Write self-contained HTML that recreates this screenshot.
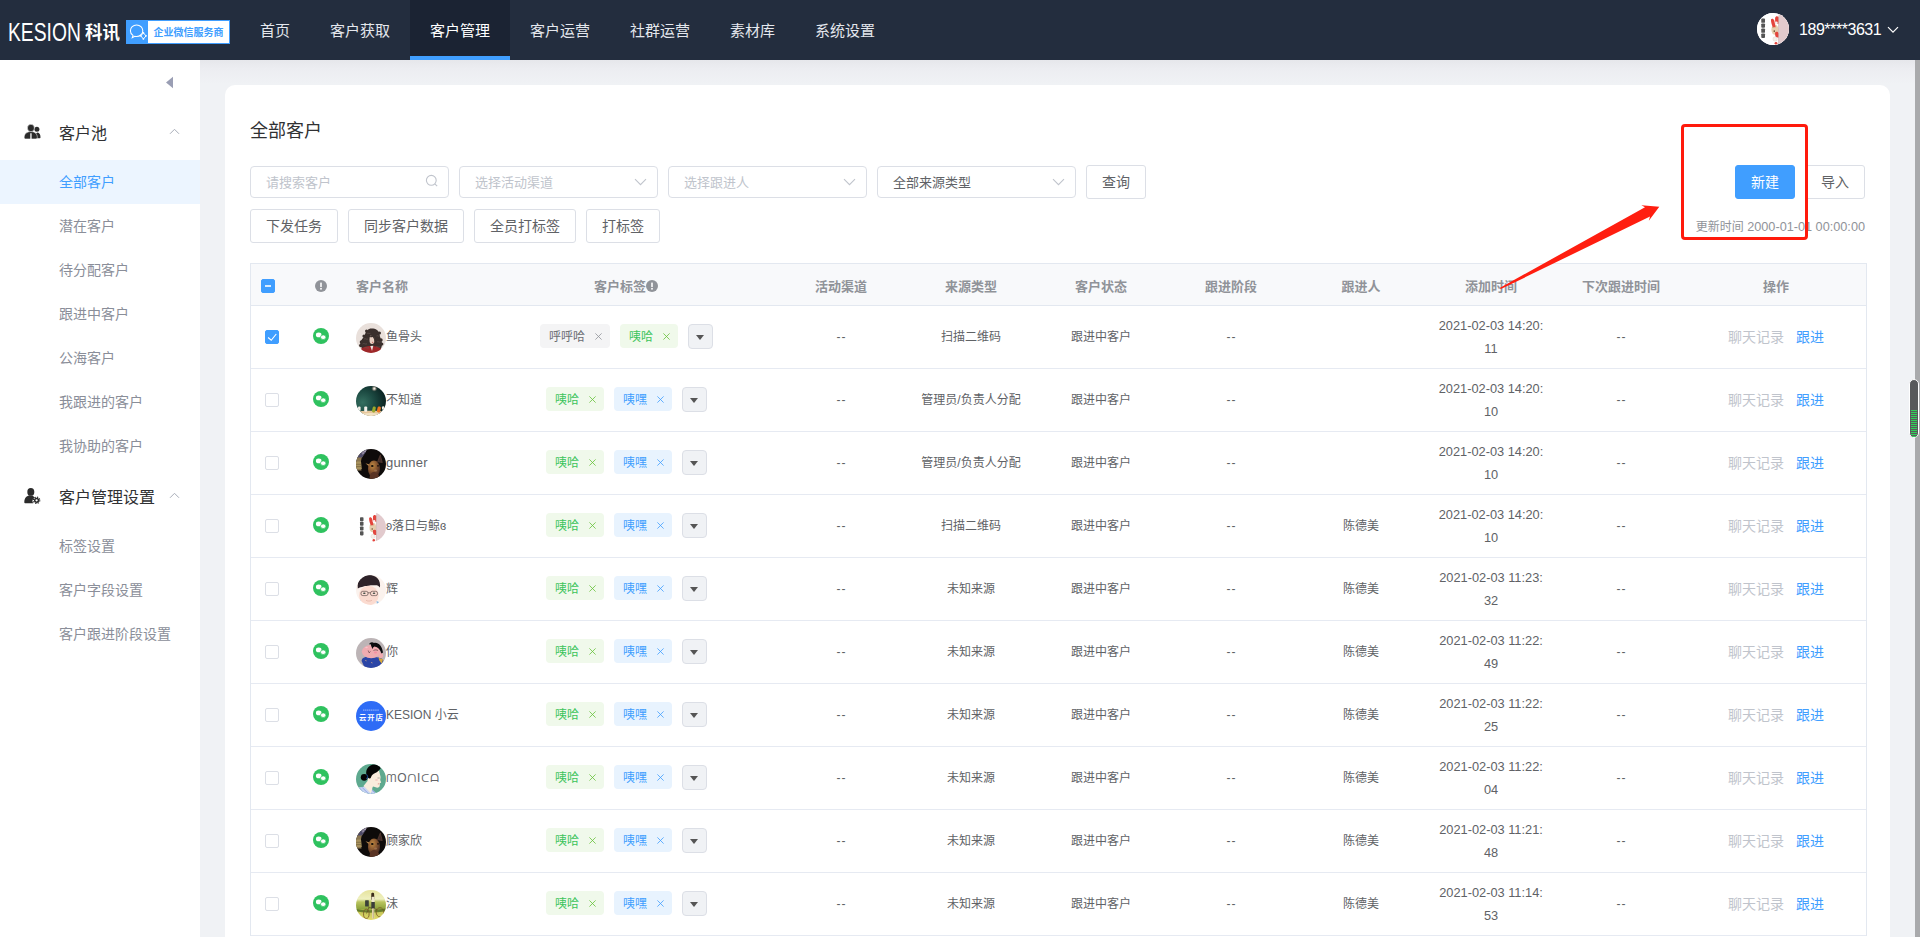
<!DOCTYPE html>
<html lang="zh-CN">
<head>
<meta charset="utf-8">
<title>全部客户</title>
<style>
*{box-sizing:border-box;margin:0;padding:0}
html,body{width:1920px;height:937px;overflow:hidden;background:#f0f2f5;}
body{font-family:"Liberation Sans","Noto Sans CJK SC",sans-serif;color:#606266;font-size:14px;position:relative}
.abs{position:absolute}
/* header */
#hd{position:absolute;left:0;top:0;width:1920px;height:60px;background:#232d3e;z-index:5}
#hdshadow{position:absolute;left:200px;top:60px;width:1715px;height:24px;background:linear-gradient(#e6e7eb,#ecedf1 35%,#f0f2f5);}
.nav{position:absolute;top:0;height:60px;line-height:62px;color:#e4e7ed;font-size:15px;text-align:center}
.nav.on{background:#1b2333;color:#fff;border-bottom:4px solid #409eff}
/* sidebar */
#sb{position:absolute;left:0;top:60px;width:200px;height:877px;background:#fff}
.grp{position:absolute;left:59px;font-size:16px;color:#303133;line-height:20px;white-space:nowrap}
.it{position:absolute;left:0;width:200px;height:44px;line-height:44px;padding-left:59px;font-size:14px;color:#8a8e99;white-space:nowrap}
.it.on{background:#ecf5ff;color:#409eff}
/* card */
#card{position:absolute;left:225px;top:85px;width:1665px;height:870px;background:#fff;border-radius:10px}
.inp{position:absolute;top:166px;height:32px;border:1px solid #dcdfe6;border-radius:4px;background:#fff;font-size:13px;line-height:31px;padding-left:15px;color:#c0c4cc;white-space:nowrap}
.btn{position:absolute;border:1px solid #dcdfe6;border-radius:3px;background:#fff;color:#606266;font-size:14px;text-align:center;white-space:nowrap}

#ttl{position:absolute;left:250px;top:119px;font-size:18px;line-height:24px;color:#303133;white-space:nowrap}
.chev{position:absolute;top:11px;right:10px}
#tbl{position:absolute;left:250px;top:263px;width:1617px;height:673px;border:1px solid #e3e8f0;border-bottom:none;background:#fff}
#th{position:absolute;left:0;top:0;width:1615px;height:42px;background:#f8f9fb;border-bottom:1px solid #e3e8f0}
.h{position:absolute;top:0;height:41px;line-height:45px;font-size:13px;font-weight:700;color:#909399;text-align:center;white-space:nowrap}
.r{position:absolute;left:0;width:1615px;height:63px;border-bottom:1px solid #e6eaf2;font-size:12px;color:#606266}
.c{position:absolute;top:0;height:62px;line-height:62px;text-align:center;white-space:nowrap}
.cb{position:absolute;width:14px;height:14px;border:1px solid #dcdfe6;border-radius:2px;background:#fff}
.cb.on{background:#409eff;border-color:#409eff}
.wx{position:absolute;left:62px;top:22px;width:16px;height:16px}
.av{position:absolute;left:105px;top:17px;width:30px;height:30px;border-radius:50%;overflow:hidden}
.nm{position:absolute;left:135px;top:0;height:62px;line-height:62px;white-space:nowrap}
.tags{position:absolute;left:224px;top:18px;width:303px;height:24px;text-align:center;white-space:nowrap;font-size:0}
.tg{display:inline-block;height:24px;line-height:26px;padding:0 8px 0 9px;border-radius:4px;font-size:12px;margin-right:10px;vertical-align:top}
.tg i{display:inline-block;width:7px;height:7px;margin-left:10px;position:relative;top:-1px}
.tg.g{background:#f0f9eb;color:#3cc45c}
.tg.b{background:#e8f3fe;color:#409eff}
.tg.n{background:#f4f4f5;color:#6b6d72}
.dd{display:inline-block;width:25px;height:25px;border:1px solid #dcdfe6;border-radius:4px;background:#f0f2f5;vertical-align:top;position:relative}
.dd:after{content:"";position:absolute;left:7px;top:10px;border:4px solid transparent;border-top:5px solid #555;border-bottom:none}
.dt{position:absolute;left:1175px;top:8px;width:130px;line-height:23px;text-align:center;font-size:12.800px}
.op1{position:absolute;left:1477px;top:0;line-height:62px;font-size:14px;color:#c0c4cc}
.op2{position:absolute;left:1545px;top:0;line-height:62px;font-size:14px;color:#409eff}
</style>
</head>
<body>
<div id="hd">
<div class="abs" id="logo1" style="left:8px;top:19px;height:26px;line-height:26px;font-size:26px;color:#fff;transform-origin:0 50%;transform:scaleX(.741);white-space:nowrap;letter-spacing:0">KESION</div>
<div class="abs" id="logo2" style="left:85px;top:20px;height:26px;line-height:26px;font-size:18px;font-weight:700;color:#fff;transform-origin:0 50%;transform:scaleX(.967);white-space:nowrap">科讯</div>
<div class="abs" style="left:126px;top:20px;width:104px;height:24px;background:#409eff;border:1px solid #409eff">
  <svg class="abs" style="left:1px;top:2px" width="20" height="20" viewBox="0 0 20 20"><path d="M8.600 1.900c-3.500 0-6.200 2.600-6.200 5.800 0 2 1 3.700 2.600 4.700l-.7 2.200 2.500-1.400c.6.150 1.200.25 1.800.25 3.500 0 6.200-2.600 6.200-5.800S12.100 1.900 8.600 1.900z" fill="none" stroke="#fff" stroke-width="1.050"/><path d="M15.400 9.800l2.600 3.100-2.600 3.100-2.600-3.100z" fill="#409eff" stroke="#fff" stroke-width=".95"/><circle cx="15.400" cy="9.900" r=".85" fill="#fff"/><circle cx="15.400" cy="16" r=".85" fill="#fff"/><circle cx="12.800" cy="12.900" r=".8" fill="#fff"/><circle cx="18" cy="12.900" r=".8" fill="#fff"/></svg>
  <div class="abs" id="badge" style="left:21px;top:0;width:81px;height:22px;background:#fff;color:#409eff;font-size:10px;font-weight:700;line-height:23px;text-align:center;white-space:nowrap">企业微信服务商</div>
</div>
<div class="nav" style="left:240px;width:70px">首页</div>
<div class="nav" style="left:310px;width:100px">客户获取</div>
<div class="nav on" style="left:410px;width:100px">客户管理</div>
<div class="nav" style="left:510px;width:100px">客户运营</div>
<div class="nav" style="left:610px;width:100px">社群运营</div>
<div class="nav" style="left:710px;width:85px">素材库</div>
<div class="nav" style="left:795px;width:100px">系统设置</div>
<div class="abs" id="uav" style="left:1757px;top:13px;width:32px;height:32px;border-radius:50%;overflow:hidden;background:#fff"><svg width="32" height="32" viewBox="0 0 30 30" style="display:block"><rect width="30" height="30" fill="#fff"/><rect x="20.200" y="0" width="10" height="30" fill="#e2cacd"/><g fill="#555"><rect x="4" y="5.200" width="3.500" height="4" rx=".8"/><rect x="4" y="9.800" width="3.500" height="4" rx=".8"/><rect x="4" y="14.500" width="3.500" height="4" rx=".8"/><rect x="4" y="19.200" width="3.500" height="4.200" rx=".8"/></g><ellipse cx="16.800" cy="15.500" rx="3.300" ry="4.800" fill="#e6ceae"/><path d="M13.100 6.200c.4-1.400 2.400-1.200 3.100.8l1.300 6.300h-2.700c-1-2.300-1.800-4.800-1.700-7.100z" fill="#e4443c"/><path d="M17 4.500c.5-2 2.500-2 3.200-.5v6h-2.600c-.6-2-.8-4-.6-5.500z" fill="#e4443c"/><circle cx="18.200" cy="9.200" r="1.250" fill="#f6efef"/><circle cx="16.200" cy="17" r=".75" fill="#6a4a2a"/><circle cx="15" cy="13.500" r=".6" fill="#c9a070"/><path d="M17 18.200c1-1 3.200-.6 3.200.9V23h-2.400c-.8-1.500-1-3.400-.8-4.800z" fill="#e4443c"/><circle cx="17" cy="24.400" r="2.100" fill="#f5efea" stroke="#d8c8b8" stroke-width=".3"/><circle cx="17.800" cy="28.400" r="1.300" fill="#e4443c"/><rect x="19.900" y="3" width=".6" height="26" fill="#b89a90" opacity=".6"/></svg></div>
<div class="abs" id="uname" style="left:1799px;top:20px;height:20px;line-height:20px;font-size:16px;letter-spacing:-.45px;color:#fff;white-space:nowrap">189****3631</div>
<svg class="abs" style="left:1887px;top:25px" width="12" height="10" viewBox="0 0 12 10"><path d="M1 2.200l5 5 5-5" fill="none" stroke="#fff" stroke-width="1.200"/></svg>
</div>
<div id="hdshadow"></div>
<div id="sb">
<svg class="abs" style="left:165px;top:16px" width="9" height="13" viewBox="0 0 9 13"><path d="M8 0.800v11.400L1 6.500z" fill="#9a9eb4"/></svg>
<svg class="abs" style="left:24px;top:64px" width="17" height="16" viewBox="0 0 17 16"><circle cx="12.900" cy="5.200" r="2.500" fill="#2b2b2b"/><path d="M11 14.300c.3-3.500 1-5.800 2.600-5.800 1.800 0 2.900 2.200 2.900 4.700 0 .7-.4 1.100-1 1.100z" fill="#2b2b2b"/><ellipse cx="6.900" cy="4" rx="3.500" ry="3.700" fill="#2b2b2b" stroke="#fff" stroke-width=".5"/><path d="M0.200 13.600c0-3.800 2.600-6 6.700-6s6.400 2.200 6.400 6c0 .8-.5 1.300-1.300 1.300H1.500c-.8 0-1.300-.5-1.300-1.300z" fill="#2b2b2b" stroke="#fff" stroke-width=".5"/><path d="M6.300 9.200h1.300v5.800H6.300z" fill="#fff"/></svg>
<div class="grp" style="top:64px">客户池</div>
<svg class="abs" style="left:169px;top:68px" width="11" height="7" viewBox="0 0 11 7"><path d="M1 5.800l4.500-4.500 4.500 4.500" fill="none" stroke="#a8adb8" stroke-width="1"/></svg>
<div class="it on" style="top:100px">全部客户</div>
<div class="it" style="top:144px">潜在客户</div>
<div class="it" style="top:188px">待分配客户</div>
<div class="it" style="top:232px">跟进中客户</div>
<div class="it" style="top:276px">公海客户</div>
<div class="it" style="top:320px">我跟进的客户</div>
<div class="it" style="top:364px">我协助的客户</div>
<svg class="abs" style="left:24px;top:428px" width="17" height="17" viewBox="0 0 17 17"><ellipse cx="6.800" cy="3.900" rx="3.500" ry="3.900" fill="#2b2b2b"/><path d="M0.300 14.200c0-4.300 2.300-6.800 5.800-6.800 2.200 0 3.800.9 4.700 2.300-1.600.7-2.500 2.100-2.300 3.700.1.700.4 1.300.8 1.800H1.500c-.7 0-1.200-.4-1.200-1z" fill="#2b2b2b"/><circle cx="12.600" cy="12.300" r="1.900" fill="none" stroke="#2b2b2b" stroke-width="1.500"/><circle cx="12.600" cy="12.300" r="3.200" fill="none" stroke="#2b2b2b" stroke-width="1.100" stroke-dasharray="1.300 1.213"/></svg>
<div class="grp" style="top:428px">客户管理设置</div>
<svg class="abs" style="left:169px;top:432px" width="11" height="7" viewBox="0 0 11 7"><path d="M1 5.800l4.500-4.500 4.500 4.500" fill="none" stroke="#a8adb8" stroke-width="1"/></svg>
<div class="it" style="top:464px">标签设置</div>
<div class="it" style="top:508px">客户字段设置</div>
<div class="it" style="top:552px">客户跟进阶段设置</div>
</div>
<div id="card"></div>
<div id="ttl">全部客户</div>
<div class="inp" style="left:250px;width:199px">请搜索客户<svg class="abs" style="left:174px;top:7px" width="14" height="14" viewBox="0 0 14 14"><circle cx="6.300" cy="6.300" r="4.900" fill="none" stroke="#c0c4cc" stroke-width="1.100"/><path d="M9.800 9.800l2.400 2.400" stroke="#c0c4cc" stroke-width="1.100"/></svg></div>
<div class="inp" style="left:459px;width:199px">选择活动渠道<svg class="chev" width="13" height="8" viewBox="0 0 13 8"><path d="M1 1.200l5.500 5.500 5.500-5.500" fill="none" stroke="#c0c4cc" stroke-width="1.100"/></svg></div>
<div class="inp" style="left:668px;width:199px">选择跟进人<svg class="chev" width="13" height="8" viewBox="0 0 13 8"><path d="M1 1.200l5.500 5.500 5.500-5.500" fill="none" stroke="#c0c4cc" stroke-width="1.100"/></svg></div>
<div class="inp" style="left:877px;width:199px;color:#606266">全部来源类型<svg class="chev" width="13" height="8" viewBox="0 0 13 8"><path d="M1 1.200l5.500 5.500 5.500-5.500" fill="none" stroke="#c0c4cc" stroke-width="1.100"/></svg></div>
<div class="btn" style="left:1086px;top:165px;width:60px;height:34px;line-height:32px">查询</div>
<div class="btn" style="left:1735px;top:165px;width:60px;height:34px;line-height:32px;background:#409eff;border-color:#409eff;color:#fff">新建</div>
<div class="btn" style="left:1805px;top:165px;width:60px;height:34px;line-height:32px">导入</div>
<div class="btn" style="left:250px;top:209px;width:88px;height:34px;line-height:32px">下发任务</div>
<div class="btn" style="left:348px;top:209px;width:116px;height:34px;line-height:32px">同步客户数据</div>
<div class="btn" style="left:474px;top:209px;width:102px;height:34px;line-height:32px">全员打标签</div>
<div class="btn" style="left:586px;top:209px;width:74px;height:34px;line-height:32px">打标签</div>
<div class="abs" id="upd" style="right:55px;top:217px;line-height:20px;font-size:12px;color:#909399;white-space:nowrap">更新时间 <span style="font-size:12.700px">2000-01-01 00:00:00</span></div>
<div id="tbl"><div id="th">
<div class="cb on" style="left:10px;top:15px"><div class="abs" style="left:3px;top:5px;width:6px;height:2px;background:rgba(255,255,255,.8)"></div></div>
<div class="abs" style="left:64px;top:16px;width:12px;height:12px;line-height:12px"><svg width="12" height="12" viewBox="0 0 12 12"><circle cx="6" cy="6" r="6" fill="#909399"/><rect x="5.200" y="2.600" width="1.600" height="4.400" rx=".5" fill="#fff"/><circle cx="6" cy="8.800" r=".95" fill="#fff"/></svg></div>
<div class="h" style="left:105px;text-align:left">客户名称</div>
<div class="h" style="left:224px;width:302px">客户标签<svg width="12" height="12" viewBox="0 0 12 12" style="vertical-align:-1px"><circle cx="6" cy="6" r="6" fill="#909399"/><rect x="5.200" y="2.600" width="1.600" height="4.400" rx=".5" fill="#fff"/><circle cx="6" cy="8.800" r=".95" fill="#fff"/></svg></div>
<div class="h" style="left:525px;width:130px">活动渠道</div>
<div class="h" style="left:655px;width:130px">来源类型</div>
<div class="h" style="left:785px;width:130px">客户状态</div>
<div class="h" style="left:915px;width:130px">跟进阶段</div>
<div class="h" style="left:1045px;width:130px">跟进人</div>
<div class="h" style="left:1175px;width:130px">添加时间</div>
<div class="h" style="left:1305px;width:130px">下次跟进时间</div>
<div class="h" style="left:1435px;width:180px">操作</div>
</div>
<div class="r" style="top:42px">
<div class="cb on" style="left:14px;top:24px"><svg class="abs" style="left:0;top:0" width="12" height="12" viewBox="0 0 12 12"><path d="M2.100 6.500l3.150 2.750 5-6.250" fill="none" stroke="#fff" stroke-width="1.150"/></svg></div>
<svg class="wx" viewBox="0 0 16 16"><circle cx="8" cy="8" r="8" fill="#2fc25f"/><ellipse cx="5.700" cy="6.900" rx="2.800" ry="2.400" fill="#fff"/><ellipse cx="10.200" cy="9.200" rx="2.700" ry="2.300" fill="#fff" stroke="#2fc25f" stroke-width=".7"/></svg>
<div class="av" id="av0"><svg width="30" height="30" viewBox="0 0 30 30" style="display:block"><rect width="30" height="30" fill="#e9e0db"/><path d="M15.500 5.500c-3.500 0-5.500 2.500-6.500 6-1 3-3.500 4.500-4.500 7.500-.8 2.500.5 5.500 2.500 7.500l17 .5c2-2.500 2.500-6 1.500-9-.8-2.500-1.500-4-2-7-.6-3.500-3.500-5.500-8-5.500z" fill="#3a2f2c"/><path d="M2 30c1.500-4.500 6-7 13.500-7s11 3 12.500 7z" fill="#9e2729"/><path d="M14.300 23l1.700 5 1.300-5.200z" fill="#efe6e2"/><g fill="#3a2f2c"><circle cx="5.500" cy="19" r="1.800"/><circle cx="4.800" cy="22.500" r="1.700"/><circle cx="8" cy="13" r="1.600"/><circle cx="25" cy="17" r="1.700"/><circle cx="25.800" cy="21" r="1.600"/><circle cx="23.500" cy="10" r="1.500"/><circle cx="10.500" cy="8" r="1.500"/></g><g fill="none" stroke="#6b5e59" stroke-width=".7" opacity=".8"><path d="M8 16c1.500-1 2.500 1 4 0M6.500 21c1.500-1.200 3 .8 4.500-.2M20.500 13c1.300-.8 2.200.8 3.500 0M21 19c1.200-1 2.500.8 3.800-.2M11 10.500c1.200-1 2.200.6 3.400-.2M8.500 25c1.500-1 3 .6 4.500-.2M20 24c1.300-1 2.500.6 4-.2"/></g><ellipse cx="16" cy="16.500" rx="2.500" ry="4.600" fill="#e7cfc2"/><path d="M13.800 14c1-2.500 3.500-3 5-1.500l.2 7c-.8-2-1-4-2.200-5.500-1 .2-2 .5-3 0z" fill="#3a2f2c"/><circle cx="16.700" cy="19.300" r=".55" fill="#b8403c"/></svg></div>
<div class="nm">鱼骨头</div>
<div class="tags"><span class="tg n">呼呼哈<i><svg width="7" height="7" viewBox="0 0 7 7" style="display:block"><path d="M.4.400l6.200 6.200M6.600.400L.4 6.600" stroke="#909399" stroke-width=".8"/></svg></i></span><span class="tg g">咦哈<i><svg width="7" height="7" viewBox="0 0 7 7" style="display:block"><path d="M.4.400l6.200 6.200M6.600.400L.4 6.600" stroke="#67c23a" stroke-width=".8"/></svg></i></span><span class="dd"></span></div>
<div class="c" style="left:525px;width:130px;letter-spacing:.9px;text-indent:.9px">--</div>
<div class="c" style="left:655px;width:130px">扫描二维码</div>
<div class="c" style="left:785px;width:130px">跟进中客户</div>
<div class="c" style="left:915px;width:130px;letter-spacing:.9px;text-indent:.9px">--</div>
<div class="dt">2021-02-03 14:20:<br>11</div>
<div class="c" style="left:1305px;width:130px;letter-spacing:.9px;text-indent:.9px">--</div>
<div class="op1">聊天记录</div><div class="op2">跟进</div>
</div>
<div class="r" style="top:105px">
<div class="cb" style="left:14px;top:24px"></div>
<svg class="wx" viewBox="0 0 16 16"><circle cx="8" cy="8" r="8" fill="#2fc25f"/><ellipse cx="5.700" cy="6.900" rx="2.800" ry="2.400" fill="#fff"/><ellipse cx="10.200" cy="9.200" rx="2.700" ry="2.300" fill="#fff" stroke="#2fc25f" stroke-width=".7"/></svg>
<div class="av" id="av1"><svg width="30" height="30" viewBox="0 0 30 30" style="display:block"><defs><radialGradient id="g1" cx=".22" cy=".55" r=".85"><stop offset="0" stop-color="#356f60"/><stop offset=".45" stop-color="#1c4a42"/><stop offset="1" stop-color="#071b1b"/></radialGradient><radialGradient id="g1b" cx=".5" cy=".5" r=".5"><stop offset="0" stop-color="#fff"/><stop offset=".35" stop-color="#e8d8c8" stop-opacity=".8"/><stop offset="1" stop-color="#5a4a40" stop-opacity="0"/></radialGradient></defs><rect width="30" height="30" fill="url(#g1)"/><circle cx="18.300" cy="2.600" r="3.200" fill="url(#g1b)"/><path d="M0 25.500c8-1 22-1 30 0V30H0z" fill="#e6c79c"/><path d="M6 27.500c6-.8 12-.8 18 0V30H6z" fill="#f3e2c4"/><rect x="2" y="20.600" width="2.600" height="4.500" rx="1" fill="#f4f1ea"/><rect x="8.200" y="20.600" width="3" height="5.200" rx="1" fill="#f4f1ea"/><rect x="16.300" y="20.500" width="3.200" height="6" rx="1.500" fill="#9aa92c" transform="rotate(12 18 23.500)"/><rect x="21.200" y="20.500" width="3.400" height="6" rx="1.500" fill="#ee7420" transform="rotate(12 23 23.500)"/><rect x="26" y="20.200" width="2.400" height="3.600" rx="1" fill="#efeae0"/></svg></div>
<div class="nm">不知道</div>
<div class="tags"><span class="tg g">咦哈<i><svg width="7" height="7" viewBox="0 0 7 7" style="display:block"><path d="M.4.400l6.200 6.200M6.600.400L.4 6.600" stroke="#67c23a" stroke-width=".8"/></svg></i></span><span class="tg b">咦嘿<i><svg width="7" height="7" viewBox="0 0 7 7" style="display:block"><path d="M.4.400l6.200 6.200M6.600.400L.4 6.600" stroke="#409eff" stroke-width=".8"/></svg></i></span><span class="dd"></span></div>
<div class="c" style="left:525px;width:130px;letter-spacing:.9px;text-indent:.9px">--</div>
<div class="c" style="left:655px;width:130px">管理员/负责人分配</div>
<div class="c" style="left:785px;width:130px">跟进中客户</div>
<div class="c" style="left:915px;width:130px;letter-spacing:.9px;text-indent:.9px">--</div>
<div class="dt">2021-02-03 14:20:<br>10</div>
<div class="c" style="left:1305px;width:130px;letter-spacing:.9px;text-indent:.9px">--</div>
<div class="op1">聊天记录</div><div class="op2">跟进</div>
</div>
<div class="r" style="top:168px">
<div class="cb" style="left:14px;top:24px"></div>
<svg class="wx" viewBox="0 0 16 16"><circle cx="8" cy="8" r="8" fill="#2fc25f"/><ellipse cx="5.700" cy="6.900" rx="2.800" ry="2.400" fill="#fff"/><ellipse cx="10.200" cy="9.200" rx="2.700" ry="2.300" fill="#fff" stroke="#2fc25f" stroke-width=".7"/></svg>
<div class="av" id="av2"><svg width="30" height="30" viewBox="0 0 30 30" style="display:block"><defs><radialGradient id="gca" cx=".38" cy=".3" r=".75"><stop offset="0" stop-color="#bd8842"/><stop offset=".45" stop-color="#8a5830"/><stop offset="1" stop-color="#3a2220"/></radialGradient></defs><rect width="30" height="30" fill="#0e0b0a"/><path d="M0 5h8l-2.500 4.500L4.500 15l1 6.500H0z" fill="#8b7650"/><path d="M0 3h10l-4 5.500H0z" fill="#4e4a68"/><path d="M3 2l9-2-5 5.500z" fill="#7c748c"/><path d="M4 3.500l1.500-.5M6.500 5l1.200-1M8.500 2.500l1.500-.4" stroke="#d8d0e0" stroke-width=".7"/><path d="M0 12.500h5l.8 7.500H0z" fill="#a8925e"/><path d="M0 15.300h5.300M0 17.600h5.600" stroke="#6a5a38" stroke-width=".6"/><path d="M24.300 5.800l-2.800 7 4.800.8z" fill="#3e2a28" stroke="#6e4c3c" stroke-width=".5"/><path d="M9.500 14.300l4.200 1.200.3 2.800z" fill="#b88a50"/><ellipse cx="18" cy="20" rx="6" ry="8.500" fill="url(#gca)"/><path d="M13.500 30c0-4.500 1.800-7 4.500-7s5 2.500 6 7z" fill="#5a3424"/><ellipse cx="16.300" cy="17" rx="1.300" ry="1.100" fill="#120c08"/><ellipse cx="22" cy="16.800" rx="1" ry=".9" fill="#22140e"/><ellipse cx="19.600" cy="21.500" rx="1.500" ry="1" fill="#b89070" opacity=".45"/></svg></div>
<div class="nm" style="font-size:13px;letter-spacing:.2px">gunner</div>
<div class="tags"><span class="tg g">咦哈<i><svg width="7" height="7" viewBox="0 0 7 7" style="display:block"><path d="M.4.400l6.200 6.200M6.600.400L.4 6.600" stroke="#67c23a" stroke-width=".8"/></svg></i></span><span class="tg b">咦嘿<i><svg width="7" height="7" viewBox="0 0 7 7" style="display:block"><path d="M.4.400l6.200 6.200M6.600.400L.4 6.600" stroke="#409eff" stroke-width=".8"/></svg></i></span><span class="dd"></span></div>
<div class="c" style="left:525px;width:130px;letter-spacing:.9px;text-indent:.9px">--</div>
<div class="c" style="left:655px;width:130px">管理员/负责人分配</div>
<div class="c" style="left:785px;width:130px">跟进中客户</div>
<div class="c" style="left:915px;width:130px;letter-spacing:.9px;text-indent:.9px">--</div>
<div class="dt">2021-02-03 14:20:<br>10</div>
<div class="c" style="left:1305px;width:130px;letter-spacing:.9px;text-indent:.9px">--</div>
<div class="op1">聊天记录</div><div class="op2">跟进</div>
</div>
<div class="r" style="top:231px">
<div class="cb" style="left:14px;top:24px"></div>
<svg class="wx" viewBox="0 0 16 16"><circle cx="8" cy="8" r="8" fill="#2fc25f"/><ellipse cx="5.700" cy="6.900" rx="2.800" ry="2.400" fill="#fff"/><ellipse cx="10.200" cy="9.200" rx="2.700" ry="2.300" fill="#fff" stroke="#2fc25f" stroke-width=".7"/></svg>
<div class="av" id="av3"><svg width="30" height="30" viewBox="0 0 30 30" style="display:block"><rect width="30" height="30" fill="#fff"/><rect x="20.200" y="0" width="10" height="30" fill="#e2cacd"/><g fill="#555"><rect x="4" y="5.200" width="3.500" height="4" rx=".8"/><rect x="4" y="9.800" width="3.500" height="4" rx=".8"/><rect x="4" y="14.500" width="3.500" height="4" rx=".8"/><rect x="4" y="19.200" width="3.500" height="4.200" rx=".8"/></g><ellipse cx="16.800" cy="15.500" rx="3.300" ry="4.800" fill="#e6ceae"/><path d="M13.100 6.200c.4-1.400 2.400-1.200 3.100.8l1.300 6.300h-2.700c-1-2.300-1.800-4.800-1.700-7.100z" fill="#e4443c"/><path d="M17 4.500c.5-2 2.500-2 3.200-.5v6h-2.600c-.6-2-.8-4-.6-5.500z" fill="#e4443c"/><circle cx="18.200" cy="9.200" r="1.250" fill="#f6efef"/><circle cx="16.200" cy="17" r=".75" fill="#6a4a2a"/><circle cx="15" cy="13.500" r=".6" fill="#c9a070"/><path d="M17 18.200c1-1 3.200-.6 3.200.9V23h-2.400c-.8-1.500-1-3.400-.8-4.800z" fill="#e4443c"/><circle cx="17" cy="24.400" r="2.100" fill="#f5efea" stroke="#d8c8b8" stroke-width=".3"/><circle cx="17.800" cy="28.400" r="1.300" fill="#e4443c"/><rect x="19.900" y="3" width=".6" height="26" fill="#b89a90" opacity=".6"/></svg></div>
<div class="nm">ʚ落日与鲸ɞ</div>
<div class="tags"><span class="tg g">咦哈<i><svg width="7" height="7" viewBox="0 0 7 7" style="display:block"><path d="M.4.400l6.200 6.200M6.600.400L.4 6.600" stroke="#67c23a" stroke-width=".8"/></svg></i></span><span class="tg b">咦嘿<i><svg width="7" height="7" viewBox="0 0 7 7" style="display:block"><path d="M.4.400l6.200 6.200M6.600.400L.4 6.600" stroke="#409eff" stroke-width=".8"/></svg></i></span><span class="dd"></span></div>
<div class="c" style="left:525px;width:130px;letter-spacing:.9px;text-indent:.9px">--</div>
<div class="c" style="left:655px;width:130px">扫描二维码</div>
<div class="c" style="left:785px;width:130px">跟进中客户</div>
<div class="c" style="left:915px;width:130px;letter-spacing:.9px;text-indent:.9px">--</div>
<div class="c" style="left:1045px;width:130px">陈德美</div>
<div class="dt">2021-02-03 14:20:<br>10</div>
<div class="c" style="left:1305px;width:130px;letter-spacing:.9px;text-indent:.9px">--</div>
<div class="op1">聊天记录</div><div class="op2">跟进</div>
</div>
<div class="r" style="top:294px">
<div class="cb" style="left:14px;top:24px"></div>
<svg class="wx" viewBox="0 0 16 16"><circle cx="8" cy="8" r="8" fill="#2fc25f"/><ellipse cx="5.700" cy="6.900" rx="2.800" ry="2.400" fill="#fff"/><ellipse cx="10.200" cy="9.200" rx="2.700" ry="2.300" fill="#fff" stroke="#2fc25f" stroke-width=".7"/></svg>
<div class="av" id="av4"><svg width="30" height="30" viewBox="0 0 30 30" style="display:block"><rect width="30" height="30" fill="#fbf2ed"/><ellipse cx="12.800" cy="20.500" rx="9.800" ry="9.800" fill="#fbdbd0"/><path d="M1.800 13.500C.8 5.500 6 0 13 0c7.500 0 12 5 11 12.500-1.500-2-3-2.500-5-2.300-2 .2-3.500-.2-5.500.3-2 .5-4 .3-6 1-2 .6-4 .8-5.700 2z" fill="#2d2229"/><g fill="none" stroke="#4a3a3a" stroke-width=".6"><rect x="5" y="16.300" width="7" height="4.300" rx="1.800"/><rect x="14.500" y="16.300" width="7" height="4.300" rx="1.800"/><path d="M12 17.800h2.500"/></g><ellipse cx="8.300" cy="18.300" rx="1.300" ry=".8" fill="#3d4a44"/><ellipse cx="18" cy="18.300" rx="1.300" ry=".8" fill="#3d4a44"/><path d="M10 25.300c1.800 1 4.200 1 6 0" fill="none" stroke="#d8a090" stroke-width=".5"/><path d="M20.500 26l2.500 1-2 2.500z" fill="#8db8e0"/><path d="M4.200 25l1 2.500-1.500-.5z" fill="#8db8e0"/></svg></div>
<div class="nm">辉</div>
<div class="tags"><span class="tg g">咦哈<i><svg width="7" height="7" viewBox="0 0 7 7" style="display:block"><path d="M.4.400l6.200 6.200M6.600.400L.4 6.600" stroke="#67c23a" stroke-width=".8"/></svg></i></span><span class="tg b">咦嘿<i><svg width="7" height="7" viewBox="0 0 7 7" style="display:block"><path d="M.4.400l6.200 6.200M6.600.400L.4 6.600" stroke="#409eff" stroke-width=".8"/></svg></i></span><span class="dd"></span></div>
<div class="c" style="left:525px;width:130px;letter-spacing:.9px;text-indent:.9px">--</div>
<div class="c" style="left:655px;width:130px">未知来源</div>
<div class="c" style="left:785px;width:130px">跟进中客户</div>
<div class="c" style="left:915px;width:130px;letter-spacing:.9px;text-indent:.9px">--</div>
<div class="c" style="left:1045px;width:130px">陈德美</div>
<div class="dt">2021-02-03 11:23:<br>32</div>
<div class="c" style="left:1305px;width:130px;letter-spacing:.9px;text-indent:.9px">--</div>
<div class="op1">聊天记录</div><div class="op2">跟进</div>
</div>
<div class="r" style="top:357px">
<div class="cb" style="left:14px;top:24px"></div>
<svg class="wx" viewBox="0 0 16 16"><circle cx="8" cy="8" r="8" fill="#2fc25f"/><ellipse cx="5.700" cy="6.900" rx="2.800" ry="2.400" fill="#fff"/><ellipse cx="10.200" cy="9.200" rx="2.700" ry="2.300" fill="#fff" stroke="#2fc25f" stroke-width=".7"/></svg>
<div class="av" id="av5"><svg width="30" height="30" viewBox="0 0 30 30" style="display:block"><rect width="30" height="30" fill="#bcb4b6"/><path d="M5.600 23c0-3 3-4.500 8-4.500l9 1c3 .5 5 2 5 4.500l-2 4-6 2.500H9z" fill="#2b45a6"/><path d="M22.500 19.800l4.500 1.500-1.200 4.500-2.300-3z" fill="#d9aa3c"/><ellipse cx="24.800" cy="17.500" rx="2.300" ry="2.800" fill="#efabb0"/><ellipse cx="15.200" cy="13.600" rx="9.400" ry="6.600" fill="#efabb0"/><path d="M13 6.200c1-2.200 3.500-2.600 5-1.200 4-1 8 2.500 9 9.500l-1.600 1c-1.200-4-3.200-6.500-7-7-1 .5-1.800 1.500-1.600 2.800-1-1.800-1.800-3.500-2-5z" fill="#0b0b0d"/><path d="M12.200 12.500l1 2.300 1.300-1.300M17.500 12.500c1.500-.8 3-.8 4.500 0" fill="none" stroke="#2a1a1a" stroke-width=".5"/><ellipse cx="10.500" cy="9.500" rx="1.300" ry=".8" fill="#f7c3cb"/><ellipse cx="19.500" cy="14.500" rx="1.600" ry="1" fill="#f58fa2"/><path d="M9.500 22l.8 1.200M15.500 24l.6 1.300" stroke="#c8a088" stroke-width=".9"/></svg></div>
<div class="nm">你</div>
<div class="tags"><span class="tg g">咦哈<i><svg width="7" height="7" viewBox="0 0 7 7" style="display:block"><path d="M.4.400l6.200 6.200M6.600.400L.4 6.600" stroke="#67c23a" stroke-width=".8"/></svg></i></span><span class="tg b">咦嘿<i><svg width="7" height="7" viewBox="0 0 7 7" style="display:block"><path d="M.4.400l6.200 6.200M6.600.400L.4 6.600" stroke="#409eff" stroke-width=".8"/></svg></i></span><span class="dd"></span></div>
<div class="c" style="left:525px;width:130px;letter-spacing:.9px;text-indent:.9px">--</div>
<div class="c" style="left:655px;width:130px">未知来源</div>
<div class="c" style="left:785px;width:130px">跟进中客户</div>
<div class="c" style="left:915px;width:130px;letter-spacing:.9px;text-indent:.9px">--</div>
<div class="c" style="left:1045px;width:130px">陈德美</div>
<div class="dt">2021-02-03 11:22:<br>49</div>
<div class="c" style="left:1305px;width:130px;letter-spacing:.9px;text-indent:.9px">--</div>
<div class="op1">聊天记录</div><div class="op2">跟进</div>
</div>
<div class="r" style="top:420px">
<div class="cb" style="left:14px;top:24px"></div>
<svg class="wx" viewBox="0 0 16 16"><circle cx="8" cy="8" r="8" fill="#2fc25f"/><ellipse cx="5.700" cy="6.900" rx="2.800" ry="2.400" fill="#fff"/><ellipse cx="10.200" cy="9.200" rx="2.700" ry="2.300" fill="#fff" stroke="#2fc25f" stroke-width=".7"/></svg>
<div class="av" id="av6"><svg width="30" height="30" viewBox="0 0 30 30" style="display:block"><rect width="30" height="30" fill="#2e6cf6"/><path d="M7 9.200h16" stroke="#dfe9ff" stroke-width="1.300" stroke-dasharray="1.400 .5" opacity=".5"/><text x="15.400" y="18.700" text-anchor="middle" font-family="Liberation Sans,Noto Sans CJK SC,sans-serif" font-size="7.300" letter-spacing=".9" font-weight="700" fill="#fff">云开店</text></svg></div>
<div class="nm">KESION 小云</div>
<div class="tags"><span class="tg g">咦哈<i><svg width="7" height="7" viewBox="0 0 7 7" style="display:block"><path d="M.4.400l6.200 6.200M6.600.400L.4 6.600" stroke="#67c23a" stroke-width=".8"/></svg></i></span><span class="tg b">咦嘿<i><svg width="7" height="7" viewBox="0 0 7 7" style="display:block"><path d="M.4.400l6.200 6.200M6.600.400L.4 6.600" stroke="#409eff" stroke-width=".8"/></svg></i></span><span class="dd"></span></div>
<div class="c" style="left:525px;width:130px;letter-spacing:.9px;text-indent:.9px">--</div>
<div class="c" style="left:655px;width:130px">未知来源</div>
<div class="c" style="left:785px;width:130px">跟进中客户</div>
<div class="c" style="left:915px;width:130px;letter-spacing:.9px;text-indent:.9px">--</div>
<div class="c" style="left:1045px;width:130px">陈德美</div>
<div class="dt">2021-02-03 11:22:<br>25</div>
<div class="c" style="left:1305px;width:130px;letter-spacing:.9px;text-indent:.9px">--</div>
<div class="op1">聊天记录</div><div class="op2">跟进</div>
</div>
<div class="r" style="top:483px">
<div class="cb" style="left:14px;top:24px"></div>
<svg class="wx" viewBox="0 0 16 16"><circle cx="8" cy="8" r="8" fill="#2fc25f"/><ellipse cx="5.700" cy="6.900" rx="2.800" ry="2.400" fill="#fff"/><ellipse cx="10.200" cy="9.200" rx="2.700" ry="2.300" fill="#fff" stroke="#2fc25f" stroke-width=".7"/></svg>
<div class="av" id="av7"><svg width="30" height="30" viewBox="0 0 30 30" style="display:block"><rect width="30" height="30" fill="#5ea98f"/><path d="M2.500 23.500l10-1.500 7.500 7-2 1.500H6z" fill="#c9d5f3"/><g stroke="#7f96dc" stroke-width=".7"><path d="M3.500 24l6 6.500M6 23.300l7 7M8.800 22.800l7.500 7M11.500 22.300l7.500 6.500"/></g><path d="M13.500 8l9.500-1.500 1.600 6.500-.4 3 1 2.500-1.300.8-.2 3c-1 1.800-2.800 1.600-4.800.6L17 22.500l-.5 1-1.500 6-7.500-7.500 4-5z" fill="#f9ecdc"/><path d="M24.300 1.500C20 -1 13.500 0 11 5c-1 2-1 4-.5 6 .8 2.500 2.500 4 3.500 3.500 1.200-.6 1-2.500 2.500-3.800 1.500-1.400 4-2 5.500-3.500.8-.8 1.500-1.800 2.500-2.500z" fill="#050505"/><circle cx="8.200" cy="13.300" r="3.400" fill="#050505"/><path d="M10.700 10.500l1 2.200-1.200 2.300" fill="none" stroke="#1d4fae" stroke-width=".9"/><path d="M21.500 14h2.200" stroke="#4a4a4a" stroke-width=".4"/><ellipse cx="20.500" cy="16" rx="1.500" ry="1" fill="#f6cfc6"/><path d="M21.800 20l1.500-.3" stroke="#d85a5a" stroke-width=".6"/></svg></div>
<div class="nm" style="font-family:'Liberation Sans','Noto Sans Canadian Aboriginal','DejaVu Sans',sans-serif;letter-spacing:.65px">ᗰOᑎIᑕᗩ</div>
<div class="tags"><span class="tg g">咦哈<i><svg width="7" height="7" viewBox="0 0 7 7" style="display:block"><path d="M.4.400l6.200 6.200M6.600.400L.4 6.600" stroke="#67c23a" stroke-width=".8"/></svg></i></span><span class="tg b">咦嘿<i><svg width="7" height="7" viewBox="0 0 7 7" style="display:block"><path d="M.4.400l6.200 6.200M6.600.400L.4 6.600" stroke="#409eff" stroke-width=".8"/></svg></i></span><span class="dd"></span></div>
<div class="c" style="left:525px;width:130px;letter-spacing:.9px;text-indent:.9px">--</div>
<div class="c" style="left:655px;width:130px">未知来源</div>
<div class="c" style="left:785px;width:130px">跟进中客户</div>
<div class="c" style="left:915px;width:130px;letter-spacing:.9px;text-indent:.9px">--</div>
<div class="c" style="left:1045px;width:130px">陈德美</div>
<div class="dt">2021-02-03 11:22:<br>04</div>
<div class="c" style="left:1305px;width:130px;letter-spacing:.9px;text-indent:.9px">--</div>
<div class="op1">聊天记录</div><div class="op2">跟进</div>
</div>
<div class="r" style="top:546px">
<div class="cb" style="left:14px;top:24px"></div>
<svg class="wx" viewBox="0 0 16 16"><circle cx="8" cy="8" r="8" fill="#2fc25f"/><ellipse cx="5.700" cy="6.900" rx="2.800" ry="2.400" fill="#fff"/><ellipse cx="10.200" cy="9.200" rx="2.700" ry="2.300" fill="#fff" stroke="#2fc25f" stroke-width=".7"/></svg>
<div class="av" id="av8"><svg width="30" height="30" viewBox="0 0 30 30" style="display:block"><defs><radialGradient id="gcb" cx=".38" cy=".3" r=".75"><stop offset="0" stop-color="#bd8842"/><stop offset=".45" stop-color="#8a5830"/><stop offset="1" stop-color="#3a2220"/></radialGradient></defs><rect width="30" height="30" fill="#0e0b0a"/><path d="M0 5h8l-2.500 4.500L4.500 15l1 6.500H0z" fill="#8b7650"/><path d="M0 3h10l-4 5.500H0z" fill="#4e4a68"/><path d="M3 2l9-2-5 5.500z" fill="#7c748c"/><path d="M4 3.500l1.500-.5M6.500 5l1.200-1M8.500 2.500l1.500-.4" stroke="#d8d0e0" stroke-width=".7"/><path d="M0 12.500h5l.8 7.500H0z" fill="#a8925e"/><path d="M0 15.300h5.300M0 17.600h5.600" stroke="#6a5a38" stroke-width=".6"/><path d="M24.300 5.800l-2.800 7 4.800.8z" fill="#3e2a28" stroke="#6e4c3c" stroke-width=".5"/><path d="M9.500 14.300l4.200 1.200.3 2.800z" fill="#b88a50"/><ellipse cx="18" cy="20" rx="6" ry="8.500" fill="url(#gcb)"/><path d="M13.500 30c0-4.500 1.800-7 4.500-7s5 2.500 6 7z" fill="#5a3424"/><ellipse cx="16.300" cy="17" rx="1.300" ry="1.100" fill="#120c08"/><ellipse cx="22" cy="16.800" rx="1" ry=".9" fill="#22140e"/><ellipse cx="19.600" cy="21.500" rx="1.500" ry="1" fill="#b89070" opacity=".45"/></svg></div>
<div class="nm">顾家欣</div>
<div class="tags"><span class="tg g">咦哈<i><svg width="7" height="7" viewBox="0 0 7 7" style="display:block"><path d="M.4.400l6.200 6.200M6.600.400L.4 6.600" stroke="#67c23a" stroke-width=".8"/></svg></i></span><span class="tg b">咦嘿<i><svg width="7" height="7" viewBox="0 0 7 7" style="display:block"><path d="M.4.400l6.200 6.200M6.600.400L.4 6.600" stroke="#409eff" stroke-width=".8"/></svg></i></span><span class="dd"></span></div>
<div class="c" style="left:525px;width:130px;letter-spacing:.9px;text-indent:.9px">--</div>
<div class="c" style="left:655px;width:130px">未知来源</div>
<div class="c" style="left:785px;width:130px">跟进中客户</div>
<div class="c" style="left:915px;width:130px;letter-spacing:.9px;text-indent:.9px">--</div>
<div class="c" style="left:1045px;width:130px">陈德美</div>
<div class="dt">2021-02-03 11:21:<br>48</div>
<div class="c" style="left:1305px;width:130px;letter-spacing:.9px;text-indent:.9px">--</div>
<div class="op1">聊天记录</div><div class="op2">跟进</div>
</div>
<div class="r" style="top:609px">
<div class="cb" style="left:14px;top:24px"></div>
<svg class="wx" viewBox="0 0 16 16"><circle cx="8" cy="8" r="8" fill="#2fc25f"/><ellipse cx="5.700" cy="6.900" rx="2.800" ry="2.400" fill="#fff"/><ellipse cx="10.200" cy="9.200" rx="2.700" ry="2.300" fill="#fff" stroke="#2fc25f" stroke-width=".7"/></svg>
<div class="av" id="av9"><svg width="30" height="30" viewBox="0 0 30 30" style="display:block"><defs><linearGradient id="g9" x1="0" y1="0" x2="0" y2="1"><stop offset="0" stop-color="#e6e39c"/><stop offset=".3" stop-color="#eff0c0"/><stop offset=".4" stop-color="#b9c45e"/><stop offset=".62" stop-color="#8fa53e"/><stop offset=".74" stop-color="#c6c658"/><stop offset="1" stop-color="#e3dc6c"/></linearGradient></defs><rect width="30" height="30" fill="url(#g9)"/><path d="M0 19c5 1 9 1.500 14 1.300 6-.2 11-1 16-1.800v2.500c-6 1-12 1.800-18 1.600-4-.1-8-.6-12-1.300z" fill="#4f6a22" opacity=".75"/><rect x="9.100" y="10.300" width="3.700" height="6.300" rx=".5" fill="#3a4038"/><ellipse cx="10.300" cy="23.800" rx="2.800" ry="4.600" fill="none" stroke="#7a5526" stroke-width=".8"/><ellipse cx="24" cy="22.300" rx="3.800" ry="4.600" fill="none" stroke="#7a5526" stroke-width=".8"/><path d="M12 17l9 2.500M13 17.500l-2.500 6" stroke="#5a4020" stroke-width=".6" fill="none"/><path d="M15.300 3.800c0-1.400 2.800-1.400 2.800 0l.3 5.500-3.200.4z" fill="#3b2b1a"/><rect x="15.600" y="6.800" width="3" height="5.400" rx=".8" fill="#efe8cc"/><rect x="15.300" y="12" width="3.500" height="6.600" fill="#3b3e3a"/><rect x="16" y="18.500" width="2.300" height="10" fill="#e9dcb4"/><rect x="16.900" y="18.500" width=".5" height="10" fill="#9a8a5a"/></svg></div>
<div class="nm">沫</div>
<div class="tags"><span class="tg g">咦哈<i><svg width="7" height="7" viewBox="0 0 7 7" style="display:block"><path d="M.4.400l6.200 6.200M6.600.400L.4 6.600" stroke="#67c23a" stroke-width=".8"/></svg></i></span><span class="tg b">咦嘿<i><svg width="7" height="7" viewBox="0 0 7 7" style="display:block"><path d="M.4.400l6.200 6.200M6.600.400L.4 6.600" stroke="#409eff" stroke-width=".8"/></svg></i></span><span class="dd"></span></div>
<div class="c" style="left:525px;width:130px;letter-spacing:.9px;text-indent:.9px">--</div>
<div class="c" style="left:655px;width:130px">未知来源</div>
<div class="c" style="left:785px;width:130px">跟进中客户</div>
<div class="c" style="left:915px;width:130px;letter-spacing:.9px;text-indent:.9px">--</div>
<div class="c" style="left:1045px;width:130px">陈德美</div>
<div class="dt">2021-02-03 11:14:<br>53</div>
<div class="c" style="left:1305px;width:130px;letter-spacing:.9px;text-indent:.9px">--</div>
<div class="op1">聊天记录</div><div class="op2">跟进</div>
</div>
</div>
<div class="abs" id="redbox" style="left:1681px;top:124px;width:127px;height:116px;border:3px solid #ff1a0c;border-radius:4px"></div>
<svg class="abs" style="left:1490px;top:195px" width="180" height="100" viewBox="1490 195 180 100"><polygon points="1500.900,289.100 1499.700,287.900 1645,207.300 1641.400,205.300 1659.300,206.700 1648.800,220.750 1650,216.500" fill="#ff1e10"/></svg>
<div class="abs" style="left:1915px;top:60px;width:5px;height:877px;background:#a9aaac"></div>
<div class="abs" id="thumb" style="left:1909px;top:379px;width:10px;height:59px;border:1px solid #fff;border-radius:5px;background:#58595b;overflow:hidden"><div class="abs" style="left:1px;top:30px;width:6px;height:27px;background:repeating-linear-gradient(#2fd158 0,#2fd158 1px,#58595b 1px,#58595b 2px)"></div></div>
</body>
</html>
